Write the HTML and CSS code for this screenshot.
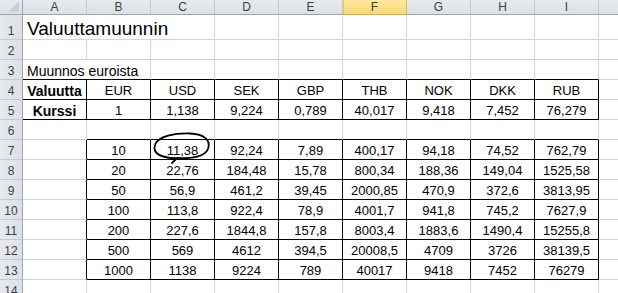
FILE: index.html
```html
<!DOCTYPE html>
<html lang="fi">
<head>
<meta charset="utf-8">
<title>Valuuttamuunnin</title>
<link rel="stylesheet" href="styles.css">
</head>
<body>
<div class="sheet">
  <div class="corner"><svg width="23" height="15" viewBox="0 0 23 15"><polygon points="20,2 20,13 9,13" fill="#c9cdd3"/></svg></div>
  <div class="ch">A</div><div class="ch">B</div><div class="ch">C</div><div class="ch">D</div><div class="ch">E</div><div class="ch sel">F</div><div class="ch">G</div><div class="ch">H</div><div class="ch">I</div><div class="ch"></div>

  <div class="rh r1">1</div>
  <div class="c title">Valuuttamuunnin</div><div class="c"></div><div class="c"></div><div class="c"></div><div class="c"></div><div class="c"></div><div class="c"></div><div class="c"></div>

  <div class="rh">2</div>
  <div class="c"></div><div class="c"></div><div class="c"></div><div class="c"></div><div class="c"></div><div class="c"></div><div class="c"></div><div class="c"></div><div class="c"></div><div class="c"></div>

  <div class="rh">3</div>
  <div class="c ab label span2">Muunnos euroista</div><div class="c ab"></div><div class="c ab"></div><div class="c ab"></div><div class="c ab"></div><div class="c ab"></div><div class="c ab"></div><div class="c ab"></div><div class="c"></div>

  <div class="rh">4</div>
  <div class="t b label">Valuutta</div><div class="t">EUR</div><div class="t">USD</div><div class="t">SEK</div><div class="t">GBP</div><div class="t">THB</div><div class="t">NOK</div><div class="t">DKK</div><div class="t">RUB</div><div class="c"></div>

  <div class="rh">5</div>
  <div class="t b label">Kurssi</div><div class="t">1</div><div class="t">1,138</div><div class="t">9,224</div><div class="t">0,789</div><div class="t">40,017</div><div class="t">9,418</div><div class="t">7,452</div><div class="t">76,279</div><div class="c"></div>

  <div class="rh">6</div>
  <div class="c"></div><div class="c ab"></div><div class="c ab"></div><div class="c ab"></div><div class="c ab"></div><div class="c ab"></div><div class="c ab"></div><div class="c ab"></div><div class="c ab"></div><div class="c"></div>

  <div class="rh">7</div>
  <div class="c lf"></div><div class="t">10</div><div class="t">11,38</div><div class="t">92,24</div><div class="t">7,89</div><div class="t">400,17</div><div class="t">94,18</div><div class="t">74,52</div><div class="t">762,79</div><div class="c"></div>

  <div class="rh">8</div>
  <div class="c lf"></div><div class="t">20</div><div class="t">22,76</div><div class="t">184,48</div><div class="t">15,78</div><div class="t">800,34</div><div class="t">188,36</div><div class="t">149,04</div><div class="t">1525,58</div><div class="c"></div>

  <div class="rh">9</div>
  <div class="c lf"></div><div class="t">50</div><div class="t">56,9</div><div class="t">461,2</div><div class="t">39,45</div><div class="t">2000,85</div><div class="t">470,9</div><div class="t">372,6</div><div class="t">3813,95</div><div class="c"></div>

  <div class="rh">10</div>
  <div class="c lf"></div><div class="t">100</div><div class="t">113,8</div><div class="t">922,4</div><div class="t">78,9</div><div class="t">4001,7</div><div class="t">941,8</div><div class="t">745,2</div><div class="t">7627,9</div><div class="c"></div>

  <div class="rh">11</div>
  <div class="c lf"></div><div class="t">200</div><div class="t">227,6</div><div class="t">1844,8</div><div class="t">157,8</div><div class="t">8003,4</div><div class="t">1883,6</div><div class="t">1490,4</div><div class="t">15255,8</div><div class="c"></div>

  <div class="rh">12</div>
  <div class="c lf"></div><div class="t">500</div><div class="t">569</div><div class="t">4612</div><div class="t">394,5</div><div class="t">20008,5</div><div class="t">4709</div><div class="t">3726</div><div class="t">38139,5</div><div class="c"></div>

  <div class="rh">13</div>
  <div class="c lf"></div><div class="t">1000</div><div class="t">1138</div><div class="t">9224</div><div class="t">789</div><div class="t">40017</div><div class="t">9418</div><div class="t">7452</div><div class="t">76279</div><div class="c"></div>

  <div class="rh">14</div>
  <div class="c"></div><div class="c"></div><div class="c"></div><div class="c"></div><div class="c"></div><div class="c"></div><div class="c"></div><div class="c"></div><div class="c"></div><div class="c"></div>

  <svg class="scribble" width="70" height="40" viewBox="150 128 70 40">
    <path d="M180,158 C161,159 152,153 155,145 C158,136 175,133 190,133.5 C205,134 211,141 208,149 C205,157 190,159 177,158 L172,163" fill="none" stroke="#000" stroke-width="1.8" stroke-linecap="round" stroke-linejoin="round"/>
  </svg>
</div>
</body>
</html>
```

FILE: styles.css
```css
html, body {
  margin: 0;
  padding: 0;
  background: #ffffff;
  overflow: hidden;
}

.sheet {
  position: relative;
  display: grid;
  grid-template-columns: 23px repeat(10, 64px);
  grid-template-rows: 15px 25px repeat(13, 20px);
  width: 663px;
  font-family: "Liberation Sans", Arial, sans-serif;
  font-size: 13px;
  color: #000;
}

.sheet > div {
  box-sizing: border-box;
  display: flex;
  align-items: flex-end;
  justify-content: center;
  line-height: 16px;
  white-space: nowrap;
  min-width: 0;
}

.sheet > .corner {
  background: linear-gradient(#e6e9ed, #dde1e6);
  border-right: 1px solid #9ea5ae;
  border-bottom: 1px solid #9ea5ae;
}

.corner svg {
  display: block;
}

.sheet > .ch {
  background: linear-gradient(#e6e9ed, #dde1e6);
  border-right: 1px solid #c4c9d0;
  border-bottom: 1px solid #9ea5ae;
  font-size: 12px;
  color: #3a3f47;
  line-height: 14px;
}

.sheet > .ch.sel {
  background: linear-gradient(#fde9a2, #f9d873);
  border-right: 1px solid #e8b54f;
  border-bottom: 1px solid #e3a93f;
  box-shadow: inset 1px 0 0 #f0c461;
}

.sheet > .rh {
  background: linear-gradient(90deg, #e6e9ed, #dde1e6);
  border-right: 1px solid #9ea5ae;
  border-bottom: 1px solid #c4c9d0;
  font-size: 12px;
  color: #3a3f47;
}

.c {
  border-right: 1px solid #d4d4d4;
  border-bottom: 1px solid #d4d4d4;
}

.sheet > .title {
  grid-column: span 3;
  justify-content: flex-start;
  padding-left: 4px;
  font-size: 19px;
  line-height: 21px;
}

.span2 {
  grid-column: span 2;
}

.sheet > .label {
  font-size: 14px;
}

.sheet > .ab.label {
  justify-content: flex-start;
  padding-left: 4px;
}

.ab {
  border-bottom: 1px solid #000;
}

.lf {
  border-right: 1px solid #000;
}

.t {
  border-right: 1px solid #000;
  border-bottom: 1px solid #000;
}

.b {
  font-weight: bold;
}

.scribble {
  position: absolute;
  left: 150px;
  top: 128px;
}
```
